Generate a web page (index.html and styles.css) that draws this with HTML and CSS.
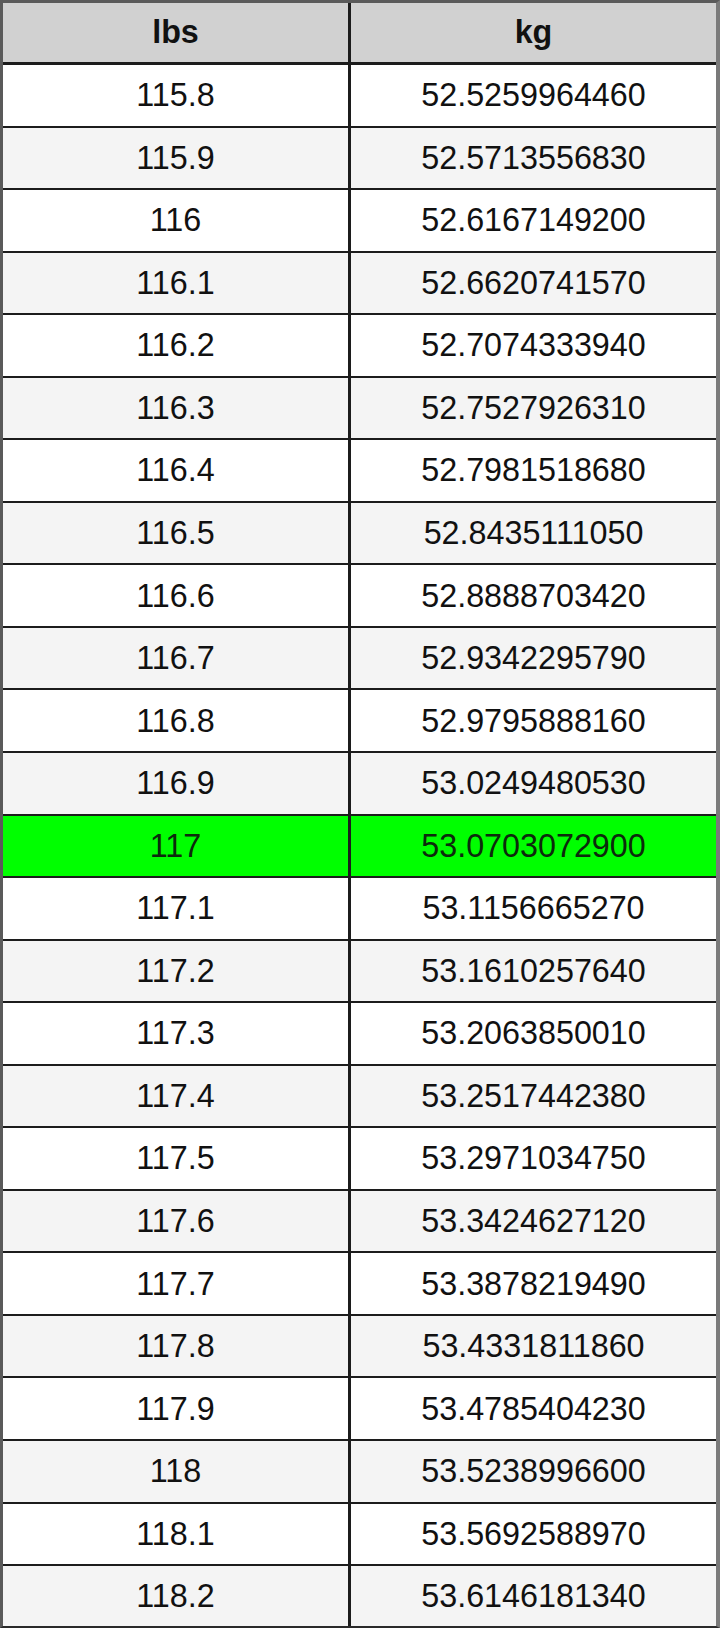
FILE: index.html
```html
<!DOCTYPE html>
<html>
<head>
<meta charset="utf-8">
<link rel="stylesheet" href="styles.css">
</head>
<body>
<div class="table">
  <div class="row head"><div class="cell c1">lbs</div><div class="cell c2">kg</div></div>
  <div class="row"><div class="cell c1">115.8</div><div class="cell c2">52.5259964460</div></div>
  <div class="row alt"><div class="cell c1">115.9</div><div class="cell c2">52.5713556830</div></div>
  <div class="row"><div class="cell c1">116</div><div class="cell c2">52.6167149200</div></div>
  <div class="row alt"><div class="cell c1">116.1</div><div class="cell c2">52.6620741570</div></div>
  <div class="row"><div class="cell c1">116.2</div><div class="cell c2">52.7074333940</div></div>
  <div class="row alt"><div class="cell c1">116.3</div><div class="cell c2">52.7527926310</div></div>
  <div class="row"><div class="cell c1">116.4</div><div class="cell c2">52.7981518680</div></div>
  <div class="row alt"><div class="cell c1">116.5</div><div class="cell c2">52.8435111050</div></div>
  <div class="row"><div class="cell c1">116.6</div><div class="cell c2">52.8888703420</div></div>
  <div class="row alt"><div class="cell c1">116.7</div><div class="cell c2">52.9342295790</div></div>
  <div class="row"><div class="cell c1">116.8</div><div class="cell c2">52.9795888160</div></div>
  <div class="row alt"><div class="cell c1">116.9</div><div class="cell c2">53.0249480530</div></div>
  <div class="row hl"><div class="cell c1">117</div><div class="cell c2">53.0703072900</div></div>
  <div class="row"><div class="cell c1">117.1</div><div class="cell c2">53.1156665270</div></div>
  <div class="row alt"><div class="cell c1">117.2</div><div class="cell c2">53.1610257640</div></div>
  <div class="row"><div class="cell c1">117.3</div><div class="cell c2">53.2063850010</div></div>
  <div class="row alt"><div class="cell c1">117.4</div><div class="cell c2">53.2517442380</div></div>
  <div class="row"><div class="cell c1">117.5</div><div class="cell c2">53.2971034750</div></div>
  <div class="row alt"><div class="cell c1">117.6</div><div class="cell c2">53.3424627120</div></div>
  <div class="row"><div class="cell c1">117.7</div><div class="cell c2">53.3878219490</div></div>
  <div class="row alt"><div class="cell c1">117.8</div><div class="cell c2">53.4331811860</div></div>
  <div class="row"><div class="cell c1">117.9</div><div class="cell c2">53.4785404230</div></div>
  <div class="row alt"><div class="cell c1">118</div><div class="cell c2">53.5238996600</div></div>
  <div class="row"><div class="cell c1">118.1</div><div class="cell c2">53.5692588970</div></div>
  <div class="row alt"><div class="cell c1">118.2</div><div class="cell c2">53.6146181340</div></div>
</div>
</body>
</html>
```
FILE: styles.css
```css
html, body {
  margin: 0;
  padding: 0;
  background: #ffffff;
}
body {
  width: 720px;
  height: 1636px;
  font-family: "Liberation Sans", Arial, Helvetica, sans-serif;
  color: #111111;
}
.table {
  width: 720px;
  box-sizing: border-box;
  border-top: 3px solid #5a5a5a;
  border-left: 3px solid #5a5a5a;
  border-right: 4px solid #7a7a7a;
  border-bottom: 2px solid #2a2a2a;
}
.row {
  display: grid;
  grid-template-columns: 348px 365px;
  height: 62.55px;
  box-sizing: border-box;
  border-bottom: 2.5px solid #1c1c1c;
  background: #ffffff;
}
.row:last-child {
  border-bottom: none;
  height: 60px;
}
.row.head {
  height: 62px;
  border-bottom: 3px solid #1c1c1c;
  background: #d1d1d1;
  font-weight: bold;
}
.row.alt {
  background: #f4f4f4;
}
.row.hl {
  background: #00ff00;
  color: #0c2a0c;
}
.cell {
  display: flex;
  align-items: center;
  justify-content: center;
  font-size: 32.3px;
  line-height: 1;
}
.c1 {
  border-right: 3px solid #1c1c1c;
}
```
